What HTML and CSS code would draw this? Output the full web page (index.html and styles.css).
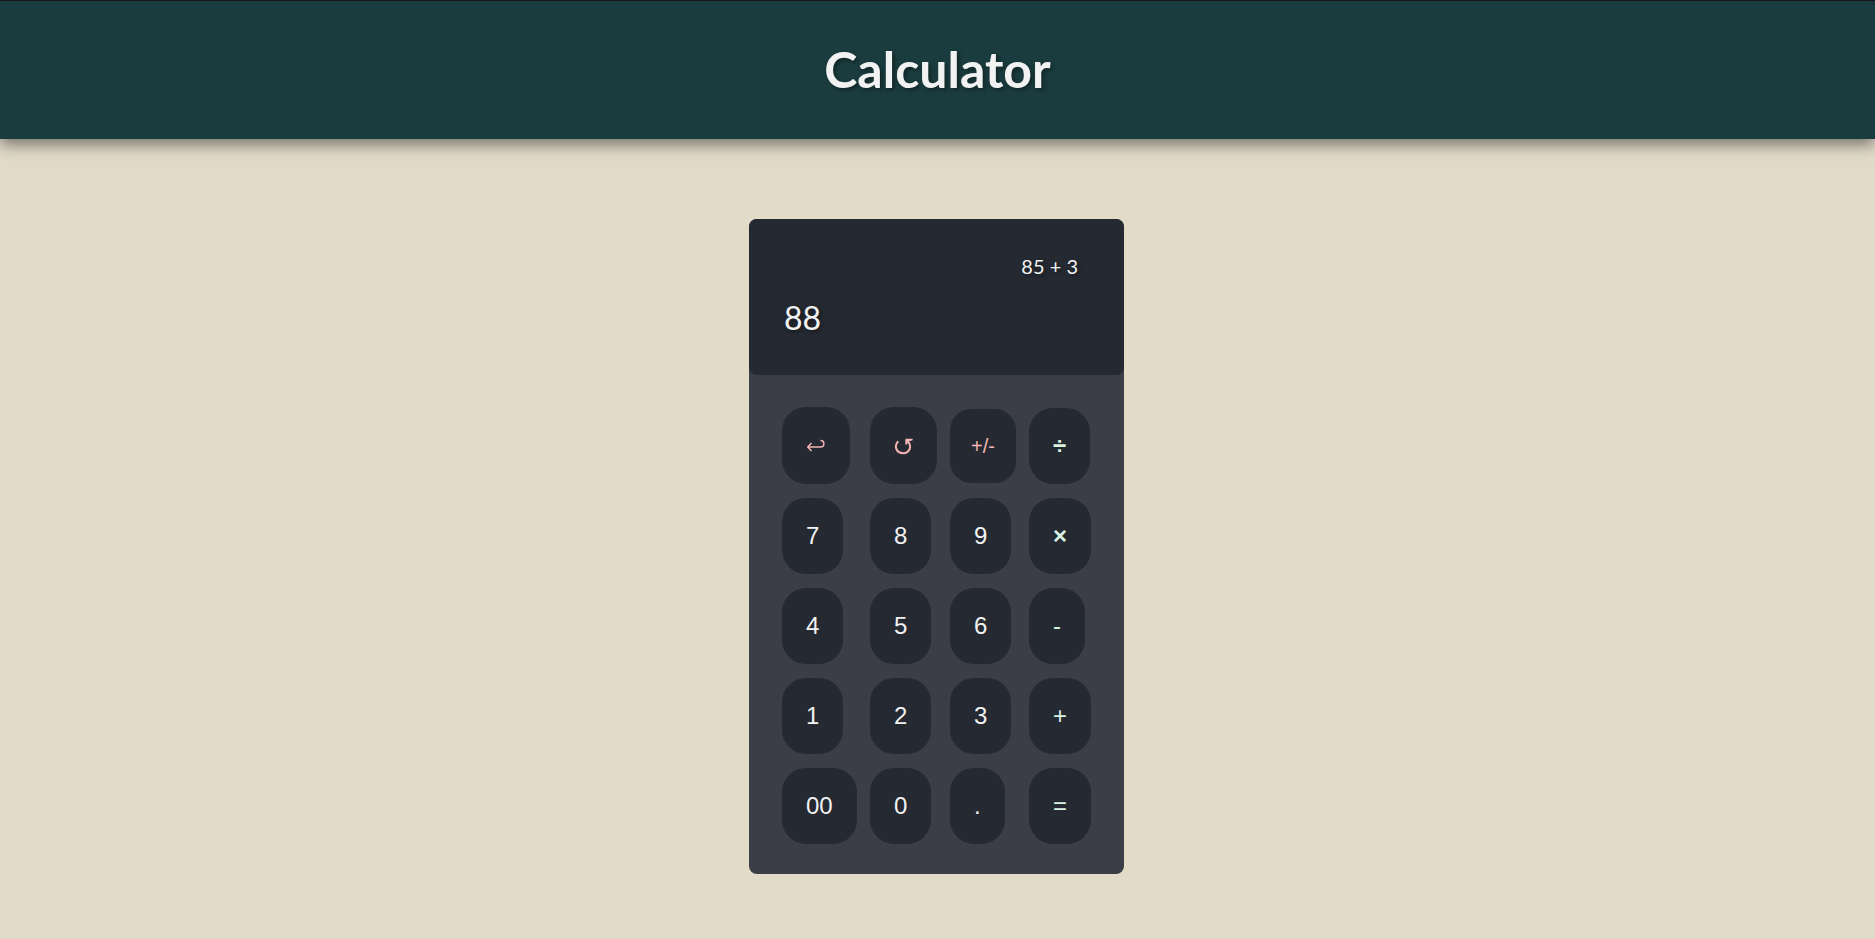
FILE: index.html
```html
<!DOCTYPE html>
<html lang="en">
<head>
<meta charset="utf-8">
<meta name="viewport" content="width=device-width, initial-scale=1">
<title>Calculator</title>
<link rel="stylesheet" href="styles.css">
</head>
<body>
<header class="header">
  <h1 class="title">Calculator</h1>
</header>
<main class="main">
  <section class="calculator" aria-label="Calculator">
    <div class="display">
      <div class="expression">85 + 3</div>
      <output class="result">88</output>
    </div>
    <div class="keys">
      <button type="button" class="key icon-key edit" aria-label="Undo">
        <svg class="icon" width="20" height="20" viewBox="0 0 20 20" aria-hidden="true"><path d="M5.500 7 1.800 11l3.700 4M2 11h12.500c4.500 0 4.500-6.500 0-6.500"/></svg>
      </button>
      <button type="button" class="key icon-key edit narrow" aria-label="Reset">
        <svg class="icon bold" width="19" height="20" viewBox="0 0 19 20" aria-hidden="true"><path d="M4.200 5.200C-0.500 10 2.500 17.200 9 17.200c6.800 0 9.500-7.500 4.300-12.500M12.300 8.500V3.500"/><path class="solid" d="M11.600 2.800h7v1.400l-6.500 2z"/></svg>
      </button>
      <button type="button" class="key sign edit">+/-</button>
      <button type="button" class="key operator strong low">÷</button>
      <button type="button" class="key">7</button>
      <button type="button" class="key">8</button>
      <button type="button" class="key">9</button>
      <button type="button" class="key operator strong">×</button>
      <button type="button" class="key">4</button>
      <button type="button" class="key">5</button>
      <button type="button" class="key">6</button>
      <button type="button" class="key operator">-</button>
      <button type="button" class="key">1</button>
      <button type="button" class="key">2</button>
      <button type="button" class="key">3</button>
      <button type="button" class="key operator">+</button>
      <button type="button" class="key">00</button>
      <button type="button" class="key">0</button>
      <button type="button" class="key">.</button>
      <button type="button" class="key operator">=</button>
    </div>
  </section>
</main>
</body>
</html>
```
FILE: styles.css
```css
* {
  box-sizing: border-box;
}

body {
  margin: 0;
  min-height: 100vh;
  background: #e1dbc8;
  color: #f2f2f2;
  font-family: Lato, "Noto Sans", sans-serif;
}

.header {
  padding: 39px 20px 41px;
  border-top: 1px solid #151518;
  background: #1a3c3e;
  box-shadow: 0 5px 15px rgba(0, 0, 0, 0.5);
  text-align: center;
}

.title {
  margin: 0;
  font-size: 50px;
  line-height: 58px;
  font-weight: 700;
  text-shadow: 2px 2px 4px rgba(0, 0, 0, 0.4);
}

.main {
  display: flex;
  justify-content: center;
  padding: 80px 22px 64px 20px;
}

.calculator {
  width: 375px;
  border-radius: 8px;
  background: #3b3e46;
}

.display {
  display: flex;
  flex-direction: column;
  gap: 20px;
  padding: 35px 35px 37px;
  border-radius: 8px;
  background: #252931;
  text-shadow: 2px 2px 4px rgba(0, 0, 0, 0.4);
}

.expression {
  padding-right: 11px;
  font-size: 20px;
  line-height: 24px;
  text-align: right;
}

.result {
  font-size: 32px;
  line-height: 40px;
}

.keys {
  display: grid;
  grid-template-columns: 74px 66px 65px 62px;
  justify-content: center;
  justify-items: start;
  gap: 14px;
  padding: 32px 0 30px;
}

.key {
  padding: 24px;
  border: 0;
  border-radius: 24px;
  background: #252931;
  color: #f2f2f2;
  font-family: "Liberation Sans", Arial, sans-serif;
  font-size: 24px;
  line-height: 28px;
  cursor: pointer;
}

.operator {
  color: #d8f3e2;
}

.strong {
  font-weight: 700;
}

.edit {
  color: #f5b5b3;
}

.icon-key {
  display: flex;
  align-items: center;
  width: 68px;
  height: 77px;
}

.narrow {
  width: 67px;
}

.sign {
  align-self: center;
  padding: 24px 21px;
  border-radius: 21px;
  font-size: 20px;
  line-height: 26px;
}

.low {
  align-self: end;
}

.icon {
  fill: none;
  stroke: currentColor;
  stroke-width: 1.5;
}

.bold {
  stroke-width: 2;
}

.solid {
  fill: currentColor;
  stroke: none;
}
```
